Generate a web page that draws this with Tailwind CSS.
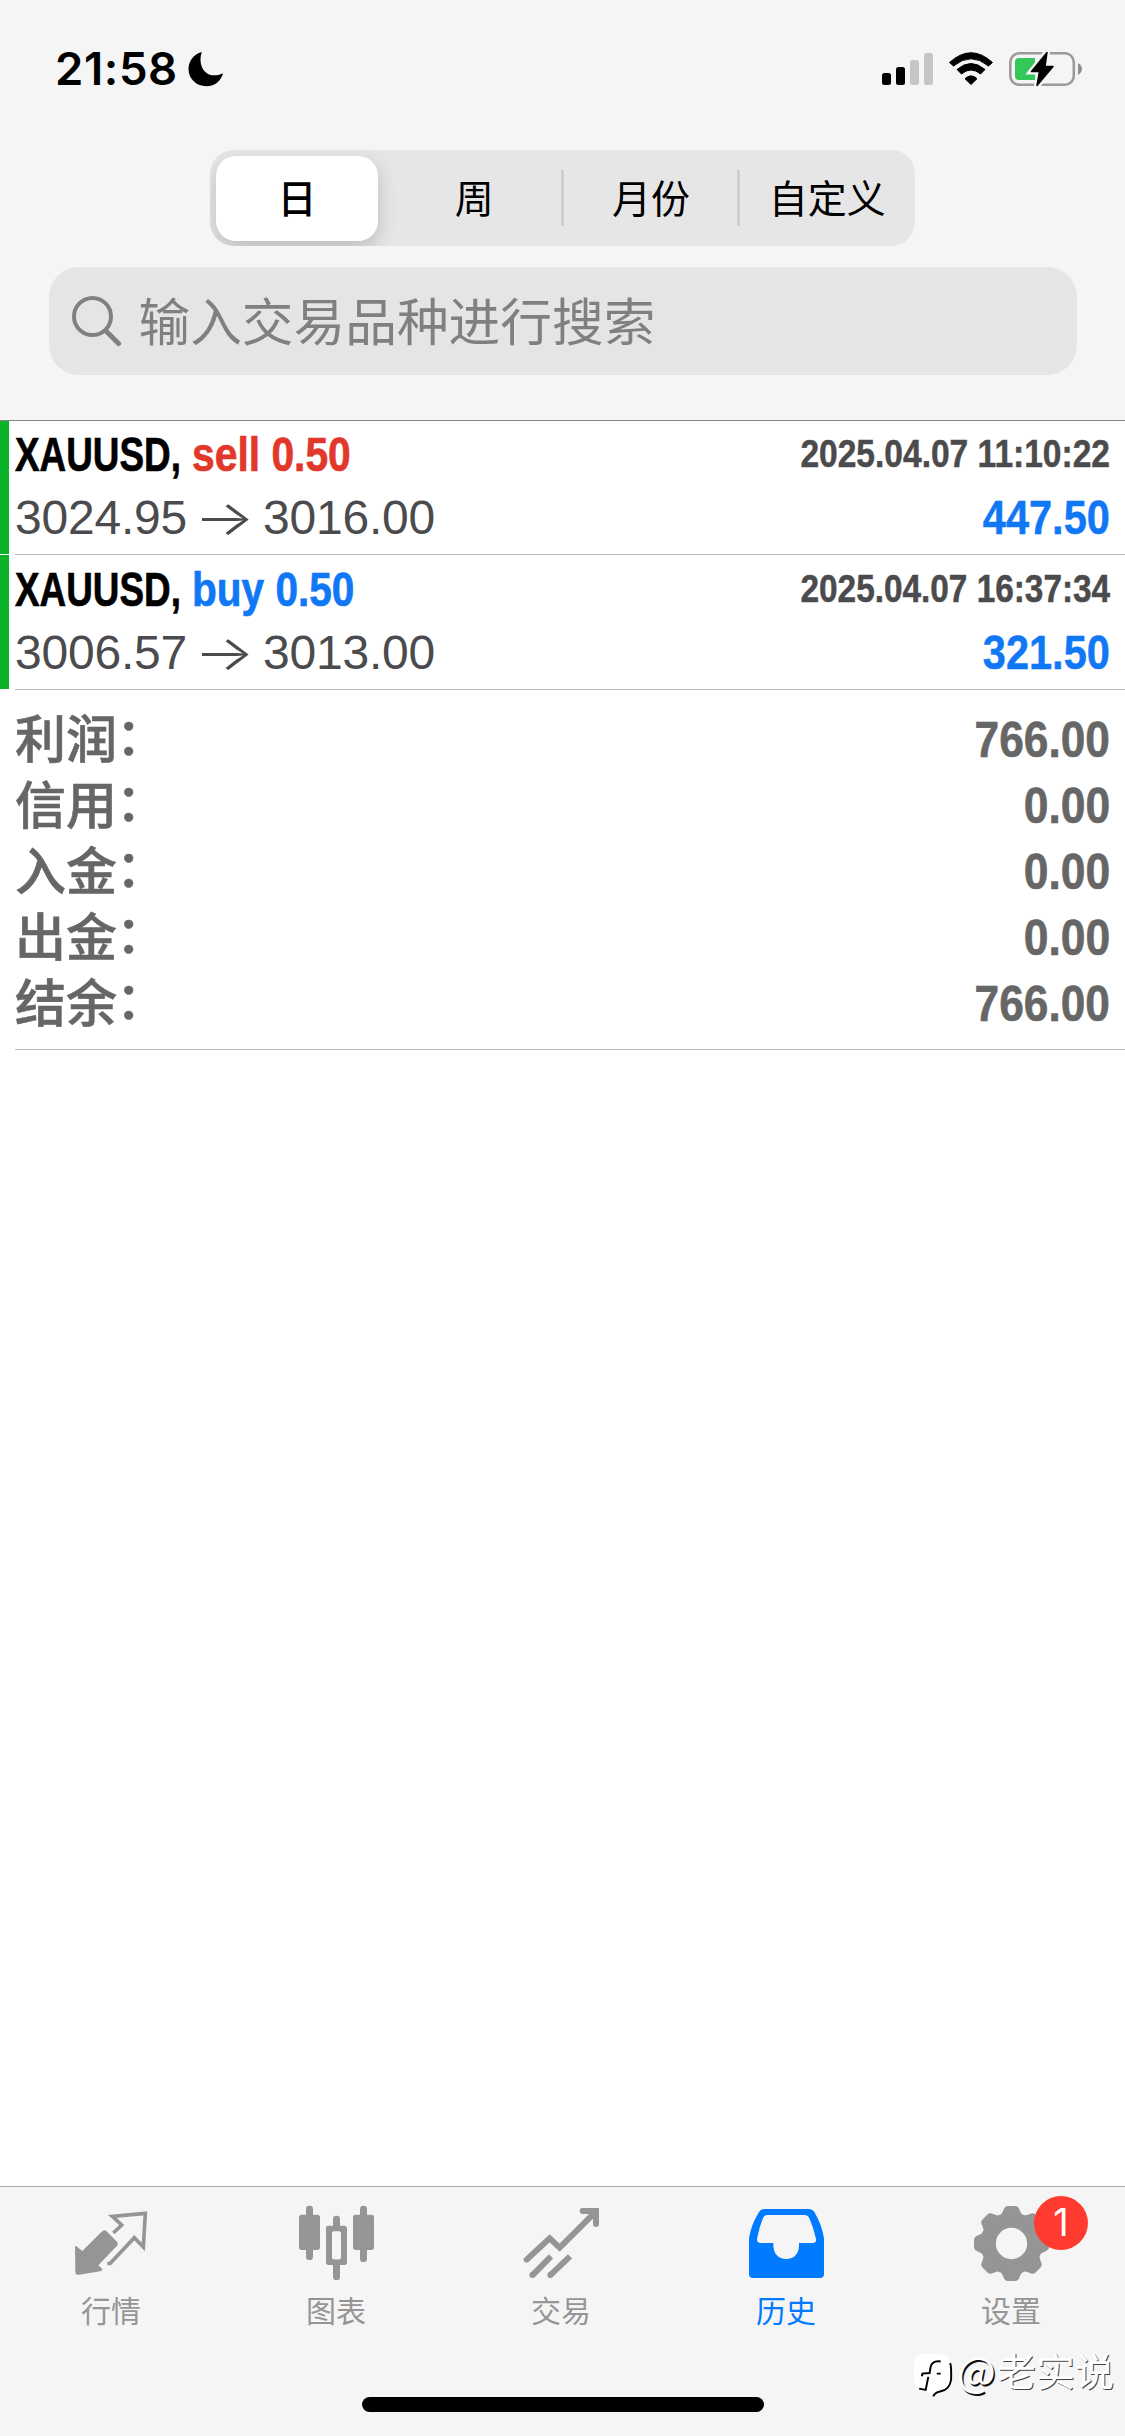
<!DOCTYPE html>
<html lang="zh-CN">
<head>
<meta charset="utf-8">
<title>历史</title>
<script src="https://cdn.jsdelivr.net/npm/@tailwindcss/browser@4"></script>
</head>
<body class="bg-white">
<div class="w-[1125px] h-[2436px] flex flex-col overflow-hidden bg-white font-['Liberation_Sans','Noto_Sans_CJK_SC',sans-serif] whitespace-nowrap">

  <header class="h-[421px] shrink-0 bg-[#f5f5f5] border-b border-[#868686] flex flex-col items-center">
    <!-- status bar -->
    <div class="w-full h-[150px] shrink-0 flex items-start justify-between pt-[40px] pl-[55px] pr-[42px]">
      <div class="flex items-start">
        <div class="w-[133px] font-['Inter',sans-serif] font-semibold text-[45.500px] leading-[58px] tracking-[0.6px] text-black">21:58</div>
        <svg class="w-[36px] h-[36px] mt-[11px]" viewBox="0 0 36 36"><path d="M13 1.2C13.6.7 13.9 1 13.5 2C10.2 13 15.500 24.500 26 24.300C29 24.300 31.500 23.700 33.500 22.700C34.600 22.300 35 22.700 34.600 23.800C32 31 26 35.200 18.500 35.200C8.500 35.200.500 28 .500 18C.500 10.300 5.500 3.500 13 1.200Z"/></svg>
      </div>
      <div class="flex items-start pt-[11px]">
        <svg class="w-[202px] h-[37px]" viewBox="881 51 202 37">
          <rect x="882" y="73" width="9" height="12" rx="2.500"/>
          <rect x="896" y="67" width="9" height="18" rx="2.500"/>
          <rect x="910" y="60" width="9" height="25" rx="2.500" fill="#c5c5c5"/>
          <rect x="924" y="53" width="9" height="32" rx="2.500" fill="#c5c5c5"/>
          <path d="M949.500 62.500Q971 43 992.500 62.500L988.500 66Q971 51.500 953.500 66Z" stroke="#000" stroke-width="1" stroke-linejoin="round"/>
          <path d="M957 69.500Q971 57.500 985 69.500L980.500 74Q971 66 961.500 74Z" stroke="#000" stroke-width="1" stroke-linejoin="round"/>
          <path d="M965 78.700Q971 73 977 78.700L971 84.500Z" stroke="#000" stroke-width="1" stroke-linejoin="round"/>
          <rect x="1010.300" y="53.300" width="63.500" height="31.500" rx="9" fill="none" stroke="#9b9b9b" stroke-width="2.600"/>
          <path d="M1078 63Q1082 65.500 1082 69T1078 75Z" fill="#8f8f8f"/>
          <path d="M1019 58H1035V80H1019Q1015 80 1015 76V62Q1015 58 1019 58Z" fill="#34c759"/>
          <path d="M1047 52L1031.500 71.500H1039.500L1037 86L1053 66.500H1045Z" stroke="#f5f5f5" stroke-width="6"/>
          <path d="M1047 52.500L1031.500 71.500H1039.500L1037 85.500L1053 66.500H1045Z" stroke="#000" stroke-width="1.500" stroke-linejoin="round"/>
        </svg>
      </div>
    </div>
    <!-- period selector -->
    <div class="w-[705px] h-[96px] shrink-0 rounded-[24px] bg-[#e6e6e6] overflow-hidden grid grid-cols-4 items-center text-[39px] text-black text-center font-['Noto_Sans_CJK_SC',sans-serif]">
      <div class="h-[85px] w-[162px] ml-[6px] rounded-[20px] bg-white shadow-[0_8px_20px_rgba(0,0,0,0.18)] leading-[81px] font-medium">日</div>
      <div class="h-[85px] leading-[81px]">周</div>
      <div class="h-[56px] -ml-[2px] leading-[52px] border-l-[3px] border-[#cfcfcf]">月份</div>
      <div class="h-[56px] -ml-[2px] leading-[52px] border-l-[3px] border-[#cfcfcf]">自定义</div>
    </div>
    <!-- search field -->
    <div class="w-[1028px] h-[108px] shrink-0 mt-[21px] rounded-[30px] bg-[#e5e5e7] flex items-center pl-[23px] text-[#808083]">
      <svg class="w-[51px] h-[51px]" viewBox="0 0 51 51" fill="none" stroke="currentColor" stroke-linecap="round"><circle cx="20.500" cy="20.500" r="18.500" stroke-width="4"/><path d="M34 35L46.500 47.500" stroke-width="5"/></svg>
      <span class="h-[108px] ml-[16px] text-[51.700px] leading-[104px] font-['Noto_Sans_CJK_SC',sans-serif]">输入交易品种进行搜索</span>
    </div>
  </header>

  <main class="flex-1 min-h-0">
    <article class="h-[134px] flex">
      <div class="w-[9px] h-[133px] bg-[#0bb32b]"></div>
      <div class="ml-[6px] flex-1 flex justify-between border-b border-[#bdbdbd] pt-[2px] pr-[15px]">
        <div>
          <div class="flex h-[63px] text-[48px] leading-[63px] font-bold [-webkit-text-stroke:0.700px_currentColor]">
            <span class="w-[177px] text-black"><span class="inline-block origin-left scale-x-[0.768]">XAUUSD,</span></span>
            <span class="w-[160px] text-[#e2382b]"><span class="inline-block origin-left scale-x-[0.85]">sell 0.50</span></span>
          </div>
          <div class="flex text-[48px] leading-[63px] text-[#4b4b4d]">
            <span class="w-[179px] tracking-[-0.2px]">3024.95</span><span class="w-[69px] font-['Inter',sans-serif] font-light"><span class="inline-block origin-left scale-x-[1.33]">→</span></span><span class="tracking-[-0.2px]">3016.00</span>
          </div>
        </div>
        <div class="flex flex-col items-end font-bold [-webkit-text-stroke:0.500px_currentColor]">
          <div class="h-[63px] text-[39px] leading-[61px] text-[#4b4b4d] origin-right scale-x-[0.86]">2025.04.07 11:10:22</div>
          <div class="text-[48px] leading-[63px] text-[#1178f5] origin-right scale-x-[0.865]">447.50</div>
        </div>
      </div>
    </article>
    <article class="h-[135px] flex">
      <div class="w-[9px] h-[134px] bg-[#0bb32b]"></div>
      <div class="ml-[6px] flex-1 flex justify-between border-b border-[#bdbdbd] pt-[3px] pr-[15px]">
        <div>
          <div class="flex h-[63px] text-[48px] leading-[63px] font-bold [-webkit-text-stroke:0.700px_currentColor]">
            <span class="w-[177px] text-black"><span class="inline-block origin-left scale-x-[0.768]">XAUUSD,</span></span>
            <span class="w-[164px] text-[#1178f5]"><span class="inline-block origin-left scale-x-[0.845]">buy 0.50</span></span>
          </div>
          <div class="flex text-[48px] leading-[63px] text-[#4b4b4d]">
            <span class="w-[179px] tracking-[-0.2px]">3006.57</span><span class="w-[69px] font-['Inter',sans-serif] font-light"><span class="inline-block origin-left scale-x-[1.33]">→</span></span><span class="tracking-[-0.2px]">3013.00</span>
          </div>
        </div>
        <div class="flex flex-col items-end font-bold [-webkit-text-stroke:0.500px_currentColor]">
          <div class="h-[63px] text-[39px] leading-[61px] text-[#4b4b4d] origin-right scale-x-[0.855]">2025.04.07 16:37:34</div>
          <div class="text-[48px] leading-[63px] text-[#1178f5] origin-right scale-x-[0.865]">321.50</div>
        </div>
      </div>
    </article>
    <!-- totals -->
    <section class="ml-[15px] h-[360px] pt-[17px] pr-[15px] border-b border-[#bdbdbd] text-[#666]">
      <div class="h-[66px] flex justify-between"><span class="text-[51px] leading-[68px] font-medium [-webkit-text-stroke:0.600px_currentColor]">利润<span class="inline-block leading-[60px] -translate-x-[1px] -translate-y-[3px]">：</span></span><span class="text-[50px] leading-[66px] font-bold origin-right scale-x-[0.885] [-webkit-text-stroke:0.600px_currentColor]">766.00</span></div>
      <div class="h-[66px] flex justify-between"><span class="text-[51px] leading-[68px] font-medium [-webkit-text-stroke:0.600px_currentColor]">信用<span class="inline-block leading-[60px] -translate-x-[1px] -translate-y-[3px]">：</span></span><span class="text-[50px] leading-[66px] font-bold origin-right scale-x-[0.89] [-webkit-text-stroke:0.600px_currentColor]">0.00</span></div>
      <div class="h-[66px] flex justify-between"><span class="text-[51px] leading-[68px] font-medium [-webkit-text-stroke:0.600px_currentColor]">入金<span class="inline-block leading-[60px] -translate-x-[1px] -translate-y-[3px]">：</span></span><span class="text-[50px] leading-[66px] font-bold origin-right scale-x-[0.89] [-webkit-text-stroke:0.600px_currentColor]">0.00</span></div>
      <div class="h-[66px] flex justify-between"><span class="text-[51px] leading-[68px] font-medium [-webkit-text-stroke:0.600px_currentColor]">出金<span class="inline-block leading-[60px] -translate-x-[1px] -translate-y-[3px]">：</span></span><span class="text-[50px] leading-[66px] font-bold origin-right scale-x-[0.89] [-webkit-text-stroke:0.600px_currentColor]">0.00</span></div>
      <div class="h-[66px] flex justify-between"><span class="text-[51px] leading-[68px] font-medium [-webkit-text-stroke:0.600px_currentColor]">结余<span class="inline-block leading-[60px] -translate-x-[1px] -translate-y-[3px]">：</span></span><span class="text-[50px] leading-[66px] font-bold origin-right scale-x-[0.885] [-webkit-text-stroke:0.600px_currentColor]">766.00</span></div>
    </section>
  </main>

  <footer class="relative h-[250px] shrink-0 bg-[#f5f5f5] border-t border-[#a8a8a8]">
    <nav class="grid grid-cols-5 pt-[15px] text-[#959595] text-center text-[30px] leading-[40px] font-['Noto_Sans_CJK_SC',sans-serif]">
      <div>
        <svg class="block w-[225px] h-[80px]" viewBox="0 96 675 240" fill="currentColor">
          <path d="M225 231Q225 226 229 229L247 243L305 185Q312 177 319 183L351 215Q356 221 351 227L295 286L307 297Q308 302 300 304Q270 310 237 314Q226 316 226 305Z"/>
          <path d="M340 189L365 165L337 139L436 130L430 231L403 203L331 280L322 281" fill="none" stroke="currentColor" stroke-width="11"/>
        </svg>
        <div class="mt-[7px] pr-[3px]">行情</div>
      </div>
      <div>
        <svg class="block w-[225px] h-[80px]" viewBox="675 96 675 240" fill="currentColor">
          <rect x="918" y="107" width="21" height="163" rx="10"/><rect x="897" y="134" width="63" height="106" rx="8"/>
          <rect x="999" y="137" width="21" height="50" rx="10"/><rect x="999" y="270" width="21" height="60" rx="10"/><path fill-rule="evenodd" d="M986 167H1033Q1041 167 1041 175V277Q1041 285 1033 285H986Q978 285 978 277V175Q978 167 986 167ZM1004 184Q996 184 996 192V260Q996 268 1004 268H1015Q1023 268 1023 260V192Q1023 184 1015 184Z"/>
          <path d="M996 192Q996 184 1004 184H1015Q1023 184 1023 192V260Q1023 268 1015 268H1004Q996 268 996 260Z" fill="#f5f5f5"/>
          <rect x="1080" y="107" width="21" height="169" rx="10"/><rect x="1059" y="134" width="63" height="106" rx="8"/>
        </svg>
        <div class="mt-[7px] pr-[3px]">图表</div>
      </div>
      <div>
        <svg class="block w-[225px] h-[80px]" viewBox="0 96 675 240" fill="none" stroke="currentColor" stroke-width="18">
          <path d="M230 269L299 205L329 233L432 130" stroke-linecap="round"/><path d="M398 123H438V162" stroke-linecap="round"/>
          <path d="M303 259L247 316M360 259L300 316"/><g fill="currentColor" stroke="none"><circle cx="247" cy="315" r="9"/><circle cx="301" cy="315" r="9"/></g>
        </svg>
        <div class="mt-[7px] pr-[3px]">交易</div>
      </div>
      <div class="text-[#007aff]">
        <svg class="block w-[225px] h-[80px]" viewBox="675 96 675 240" fill="currentColor">
          <path fill-rule="evenodd" d="M944 117H1076Q1087 117 1093 126Q1115 162 1122 205V312Q1122 324 1110 324H909Q897 324 897 312V205Q904 162 927 126Q933 117 944 117ZM952 135Q944 135 940 142Q928 170 921 206Q920 219 932 219H970V226C970 252 986 267 1009 267S1047 252 1047 226V219H1088Q1100 219 1098 206Q1090 172 1078 145Q1073 135 1063 135Z"/>
        </svg>
        <div class="mt-[7px] pr-[3px]">历史</div>
      </div>
      <div class="relative">
        <svg class="block w-[225px] h-[80px]" viewBox="150 96 675 240" fill="currentColor">
          <defs><path id="tooth" d="M445 145Q454 136 460 121Q464 108 474 108H495Q505 108 509 121Q515 136 524 145V160H445Z"/></defs>
          <circle cx="484.500" cy="220.500" r="70" fill="none" stroke="currentColor" stroke-width="46"/>
          <use href="#tooth"/><use href="#tooth" transform="rotate(45 484.500 220.500)"/><use href="#tooth" transform="rotate(90 484.500 220.500)"/><use href="#tooth" transform="rotate(135 484.500 220.500)"/><use href="#tooth" transform="rotate(180 484.500 220.500)"/><use href="#tooth" transform="rotate(225 484.500 220.500)"/><use href="#tooth" transform="rotate(270 484.500 220.500)"/><use href="#tooth" transform="rotate(315 484.500 220.500)"/>
        </svg>
        <div class="mt-[7px] pr-[3px]">设置</div>
        <span class="absolute left-[134px] -top-[6px] w-[54px] h-[54px] rounded-full bg-[#ff3b30] text-white text-[38px] leading-[53px] font-['Inter',sans-serif]">1</span>
      </div>
    </nav>
    <!-- home indicator -->
    <div class="absolute left-[362px] top-[210px] w-[402px] h-[15px] rounded-full bg-black"></div>
    <!-- watermark -->
    <div class="absolute left-[912px] top-[160px] flex items-start">
      <svg class="w-[45px] h-[55px] mt-[5px]" viewBox="0 0 138 168">
        <path d="M38 6H84Q118 6 118 40V82Q118 112 88 118Q74 122 66 136L42 120Q6 112 6 86V40Q6 6 38 6Z" fill="#fff"/>
        <path d="M117 34Q121 44 120 84Q116 116 86 121Q70 124 65 136" fill="none" stroke="#000" stroke-width="6"/>
        <path d="M88 29Q62 25 57 46L54 64L32 66L30 74M50 76L42 116L22 112M76 66H88" fill="none" stroke="#000" stroke-width="6"/>
      </svg>
      <div class="flex items-start text-white leading-[44px] font-['Noto_Sans_CJK_SC',sans-serif]">
        <span class="w-[40px] text-[41px] [text-shadow:1.500px_1.500px_0_#111]">@</span>
        <span class="text-[39px] [text-shadow:1px_1px_0_#444]">老实说</span>
      </div>
    </div>
  </footer>
</div>
</body>
</html>
